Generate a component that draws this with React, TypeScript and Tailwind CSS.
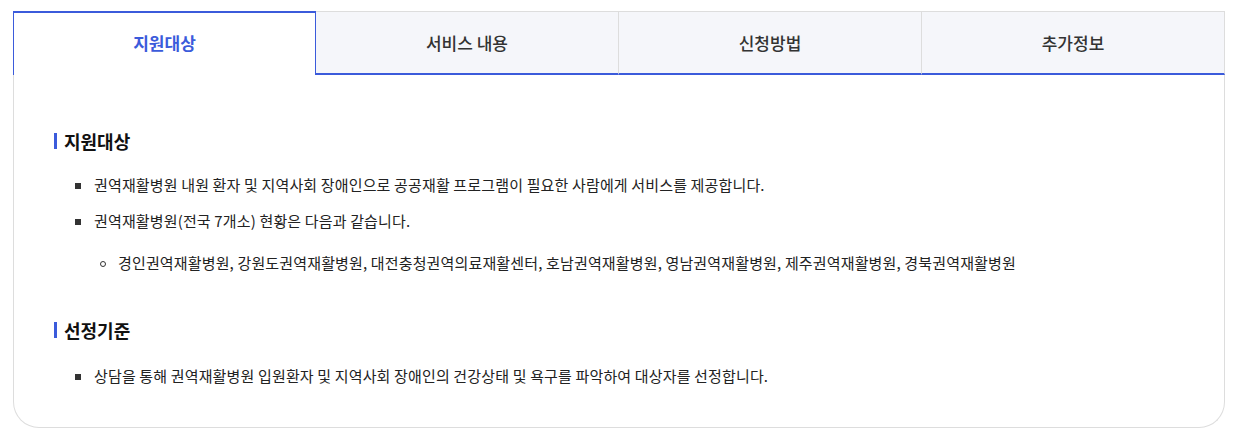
import React from 'react';

const tabs = ['지원대상', '서비스 내용', '신청방법', '추가정보'];

const Square = () => <span className="mt-[9px] h-[6px] w-[6px] shrink-0 bg-[#333]" />;

const App = () => {
  const active = 0;

  return (
    <div
      className="h-[438px] w-[1235px] bg-white pl-[13px] pt-[11px] text-[#222]"
      style={{ fontFamily: '"Noto Sans CJK KR", "Noto Sans", sans-serif' }}
    >
      <div className="w-[1212px]">
        <div className="flex">
          {tabs.map((tab, i) =>
            i === active ? (
              <div
                key={tab}
                className="flex h-[64px] w-[303px] items-center justify-center border-x border-t-2 border-[#3b5bdb] bg-white pb-[2px] text-[17px] font-bold text-[#3b5bdb]"
              >
                {tab}
              </div>
            ) : (
              <div
                key={tab}
                className="flex h-[64px] w-[303px] items-center justify-center border-t border-r border-b-2 border-t-[#dddddd] border-r-[#dddddd] border-b-[#3b5bdb] bg-[#f5f6fa] pt-[1px] text-[17px] font-medium text-[#333]"
              >
                {tab}
              </div>
            )
          )}
        </div>

        <div className="h-[353px] rounded-b-[26px] border-x border-b border-[#dddddd] pl-[40px] pt-[53px]">
          <h3 className="flex items-center gap-[7px] text-[18px] font-bold leading-[26px] text-[#111]">
            <span className="h-[16px] w-[3px] bg-[#3b5bdb]" />
            지원대상
          </h3>
          <ul className="mt-[20px] flex flex-col gap-[14px] pl-[21px] text-[15px] leading-[22px] tracking-[0.15px]">
            <li className="flex gap-[13px]">
              <Square />
              <span>권역재활병원 내원 환자 및 지역사회 장애인으로 공공재활 프로그램이 필요한 사람에게 서비스를 제공합니다.</span>
            </li>
            <li>
              <div className="flex gap-[13px]">
                <Square />
                <span>권역재활병원(전국 7개소) 현황은 다음과 같습니다.</span>
              </div>
              <ul className="mt-[20px] pl-[25px]">
                <li className="flex gap-[12px]">
                  <span className="mt-[9px] h-[6px] w-[6px] shrink-0 rounded-full border border-[#333]" />
                  <span>경인권역재활병원, 강원도권역재활병원, 대전충청권역의료재활센터, 호남권역재활병원, 영남권역재활병원, 제주권역재활병원, 경북권역재활병원</span>
                </li>
              </ul>
            </li>
          </ul>

          <h3 className="mt-[43px] flex items-center gap-[7px] text-[18px] font-bold leading-[26px] text-[#111]">
            <span className="h-[16px] w-[3px] bg-[#3b5bdb]" />
            선정기준
          </h3>
          <ul className="mt-[22px] pl-[21px] text-[15px] leading-[22px] tracking-[0.15px]">
            <li className="flex gap-[13px]">
              <Square />
              <span>상담을 통해 권역재활병원 입원환자 및 지역사회 장애인의 건강상태 및 욕구를 파악하여 대상자를 선정합니다.</span>
            </li>
          </ul>
        </div>
      </div>
    </div>
  );
};

export default App;
